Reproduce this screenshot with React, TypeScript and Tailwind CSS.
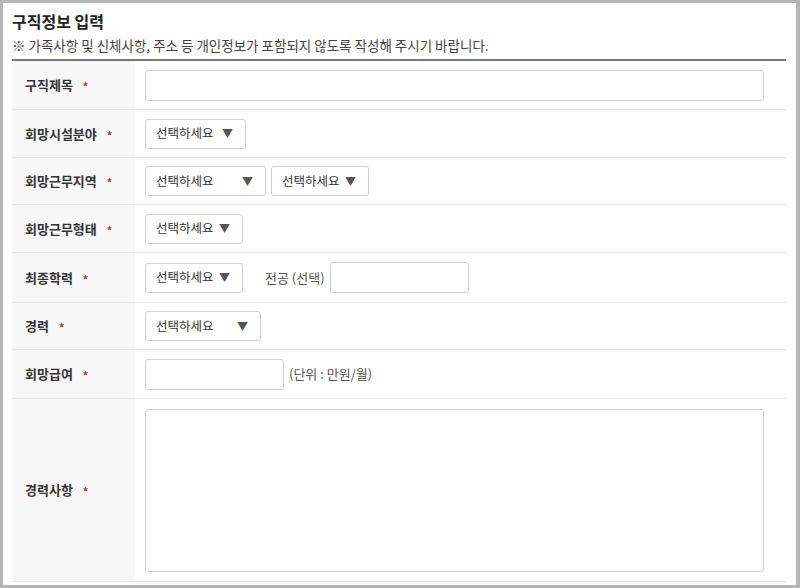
import React from 'react';

const font = { fontFamily: '"Noto Sans CJK KR", "Noto Sans", sans-serif' };

function Star() {
  return <span className="ml-[10px] mt-[3px] text-[11px] text-[#e0202a]">*</span>;
}

function Select({ w }: { w: string }) {
  return (
    <div
      className={`${w} h-[30px] border border-[#cfcfcf] rounded-[3px] bg-white flex items-center justify-between pl-[10px] pr-[12px] text-[12.5px] text-[#333]`}
    >
      <span>선택하세요</span>
      <span className="text-[11px] text-[#555]">▼</span>
    </div>
  );
}

function Input({ w, h = 'h-[31px]' }: { w: string; h?: string }) {
  return <div className={`${w} ${h} border border-[#cfcfcf] rounded-[3px] bg-white`} />;
}

function Row({ label, h, children }: { label: string; h: string; children: React.ReactNode }) {
  return (
    <div className={`flex ${h} border-b border-[#e6e6e6]`}>
      <div className="w-[123px] shrink-0 bg-[#f7f7f7] flex items-center pl-[13px] text-[13px] font-bold text-[#333]">
        {label}
        <Star />
      </div>
      <div className="flex-1 flex items-center pl-[10px] gap-[5px]">{children}</div>
    </div>
  );
}

export default function App() {
  return (
    <div className="w-[800px] h-[588px] bg-[#b5b5b5] pt-[3px] pl-[3px] pr-[4px] pb-[3px]" style={font}>
      <div className="h-full bg-white pl-[9px] pr-[10px] overflow-hidden">
        <h1 className="pt-[7px] text-[16px] font-bold text-[#222] leading-[22px]">구직정보 입력</h1>
        <p className="mt-[4px] text-[13.5px] text-[#444] leading-[18px]">
          ※ 가족사항 및 신체사항, 주소 등 개인정보가 포함되지 않도록 작성해 주시기 바랍니다.
        </p>
        <div className="mt-[5px] border-t-2 border-[#777]">
          <Row label="구직제목" h="h-[49px]">
            <Input w="w-[619px]" />
          </Row>
          <Row label="회망시설분야" h="h-[48px]">
            <Select w="w-[101px]" />
          </Row>
          <Row label="회망근무지역" h="h-[47px]">
            <Select w="w-[121px]" />
            <Select w="w-[98px]" />
          </Row>
          <Row label="회망근무형태" h="h-[48px]">
            <Select w="w-[98px]" />
          </Row>
          <Row label="최종학력" h="h-[50px]">
            <Select w="w-[98px]" />
            <span className="ml-[17px] text-[13px] text-[#555]">전공 (선택)</span>
            <Input w="w-[139px]" />
          </Row>
          <Row label="경력" h="h-[47px]">
            <Select w="w-[116px]" />
          </Row>
          <Row label="회망급여" h="h-[49px]">
            <Input w="w-[139px]" />
            <span className="text-[13px] text-[#555]">(단위 : 만원/월)</span>
          </Row>
          <Row label="경력사항" h="h-[183px]">
            <Input w="w-[619px]" h="h-[163px]" />
          </Row>
        </div>
      </div>
    </div>
  );
}
